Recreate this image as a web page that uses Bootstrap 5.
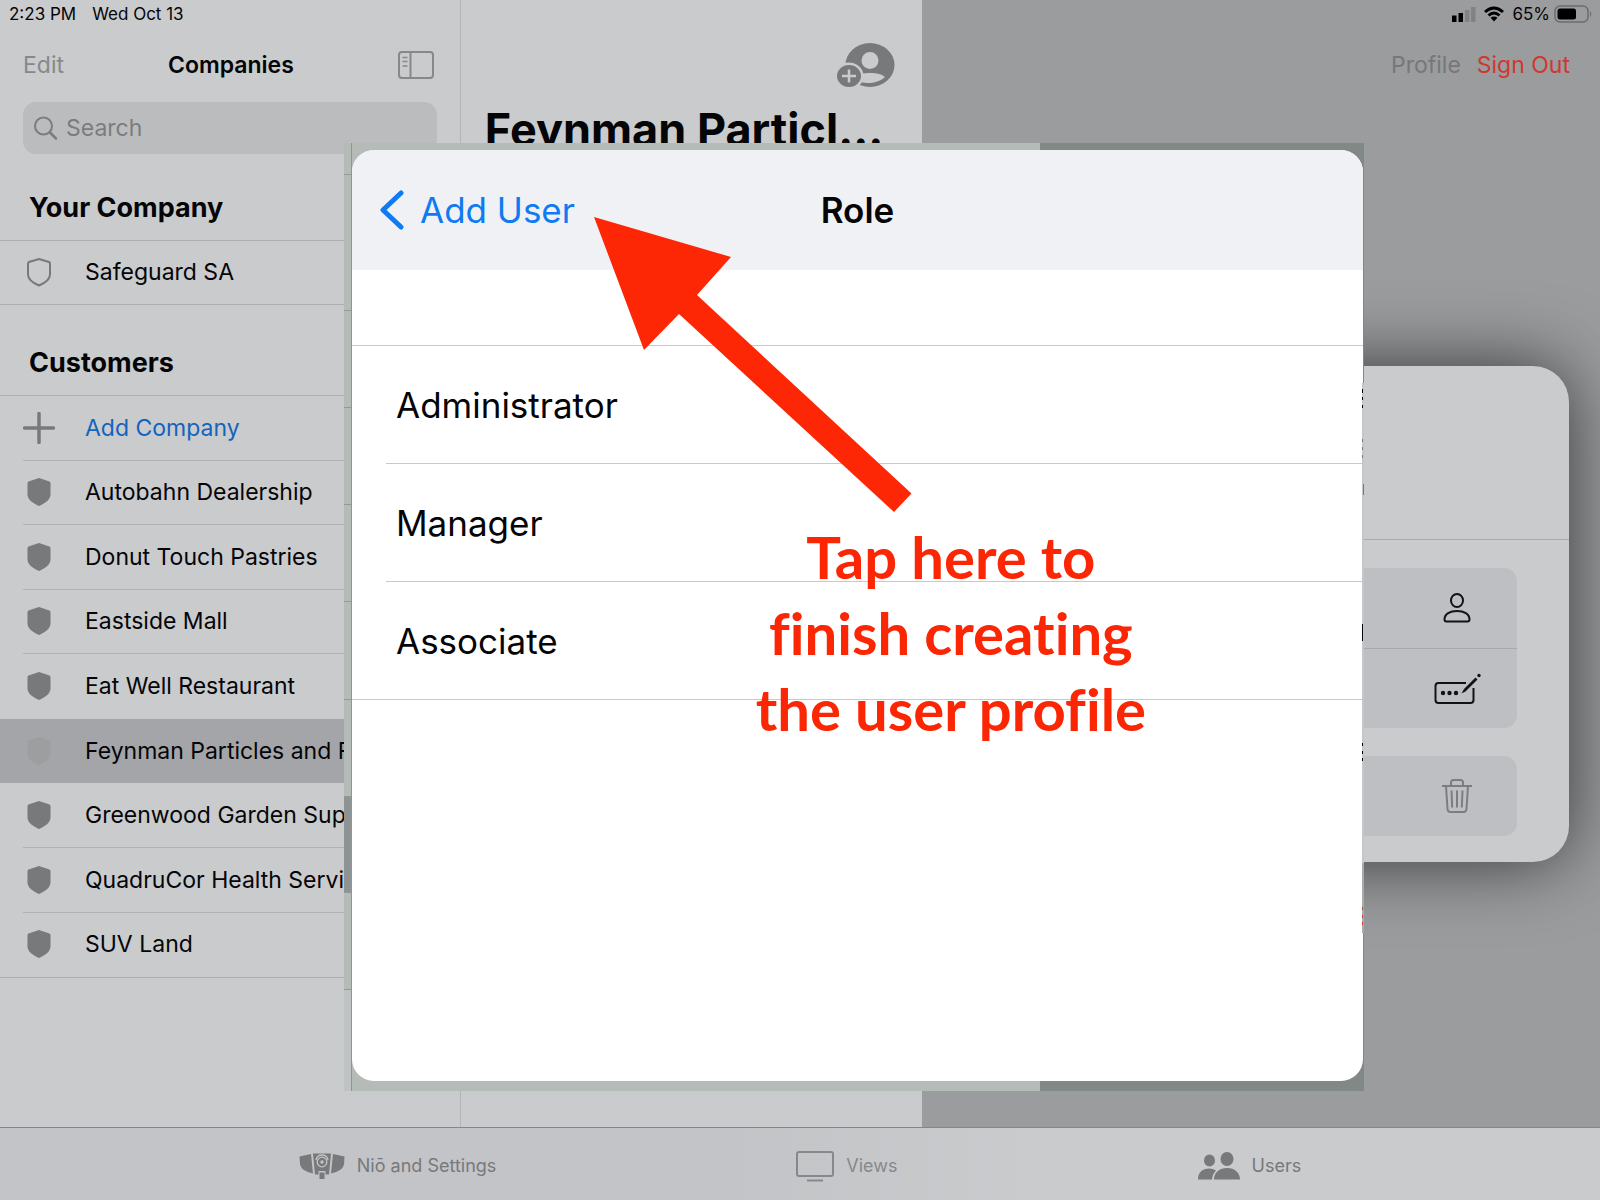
<!DOCTYPE html>
<html lang="en">
<head>
<meta charset="utf-8">
<meta name="viewport" content="width=device-width, initial-scale=1">
<title>Companies</title>
<link href="https://cdn.jsdelivr.net/npm/bootstrap@5.3.0/dist/css/bootstrap.min.css" rel="stylesheet">
<style>
  body { font-family: Inter, "Liberation Sans", sans-serif; font-size: 23px; line-height: 36px; color: #050507; background: #c9cbcd; }
  a, button { color: inherit; text-decoration: none; }
  button { background: none; border: 0; padding: 0; }
  svg { display: block; flex: none; }
  .tone-muted { color: #87888b; }
  .tone-icon { color: #77797b; }
  .tone-link { color: #1463bd; }
  .tone-alert { color: #cf3732; }
  .tone-profile { color: #767779; }

  .pane { flex: 0 0 28.8%; min-width: 0; border-right: 1px solid #b2b3b5; }
  .pane-mid { border-right: 0; }
  .pane-detail { min-width: 0; background: #9b9c9e; overflow: hidden; }
  .status-row { height: 28px; font-size: 17px; line-height: 28px; padding: 0 8px 0 9px; }
  .top-row { height: 74px; padding: 0 26px 0 23px; }
  .top-row h1 { font-size: 23px; line-height: 36px; }
  .find-box { height: 52px; margin: 0 23px; padding: 0 11px; gap: 9px; border-radius: 13px; background: #bbbcbe; color: #7b7c7f; }
  .find-box input { background: none; border: 0; outline: 0; padding: 0; color: inherit; }
  .find-box input::placeholder { color: #7b7c7f; opacity: 1; }
  .section-title { font-size: 27px; line-height: 36px; font-weight: 700; margin: 0; padding: 36px 29px 14px; }
  .section-title + .org-list { border-top: 1px solid #adaeb0; border-bottom: 1px solid #adaeb0; }
  .section-next { padding-top: 40px; }
  .org-list { height: 65px; }
  .org-list-long { height: 583px; }
  .org-row { padding-left: 23px; background: none; }
  .org-row > span { border-bottom: 1px solid #b0b1b3; gap: 30px; white-space: nowrap; }
  .org-row:last-child > span, .org-row.no-rule > span { border-color: transparent; }
  .org-row.is-current { background: #a4a5a9; }
  .org-row.is-current > span { border-color: transparent; }
  .org-row.is-current svg { color: #9d9ea0; }
  .pane-title { font-size: 45px; line-height: 56px; font-weight: 700; margin: 0; padding: 0 24px; white-space: nowrap; }

  .detail-card { width: 620px; height: 496px; margin: 264px 31px 0 auto; border-radius: 36px; background: #c9cbcd; box-shadow: 0 0 72px rgba(0,0,0,.65); }
  .detail-head { height: 174px; border-bottom: 1px solid #a9aaac; }
  .detail-group { margin: 28px 52px 0; border-radius: 13px; background: #bebfc3; overflow: hidden; }
  .detail-group button { height: 80px; padding-right: 40px; }
  .detail-group button + button { border-top: 1px solid #a7a8ab; }
  .icon-slot { width: 40px; }

  .tab-strip { height: 73px; gap: 300px; border-top: 1px solid #85868a; background: linear-gradient(90deg, #c3c4c7 45%, #c9cbcd 65%); color: #77797b; font-size: 18px; padding-top: 4px; }
  .tab-strip a { gap: 12px; }

  .snap { position: absolute; left: 21.5%; right: 14.75%; top: 143px; bottom: 109px; background: linear-gradient(90deg, #b5bcb8 68.2%, #828885 68.2%); }
  .snap-edge { width: 8px; border-right: 1px solid #8f9693; }
  .snap-edge i { display: block; flex: 0 0 97px; border-top: 1px solid #929996; }
  .snap-edge i:nth-child(1) { flex-basis: 31px; border: 0; }
  .snap-edge i:nth-child(2) { flex-basis: 136px; }
  .snap-edge i:nth-child(6) { flex-basis: 98px; }
  .snap-edge i.dim { flex-basis: 96px; background: #8e9394; }
  .snap-edge i:last-child { flex: 1 1 0; background: #c0c3c4; }
  .sheet { margin: 7px 1px 10px 0; border-radius: 22px; background: #fff; overflow: hidden; font-size: 35px; line-height: 48px; }
  .sheet-bar { height: 120px; background: #f0f1f5; margin-bottom: 75px; padding: 0 28px; }
  .sheet-bar h2 { font-size: 35px; line-height: 48px; }
  .back-btn { color: #0f7bf2; gap: 16px; }
  .role-list { border-top: 1px solid #c9c9cb; border-bottom: 1px solid #c9c9cb; padding-left: 34px; }
  .role-list button { height: 118px; padding: 0 10px; }
  .role-list button:first-child { height: 117px; }
  .role-list button + button { border-top: 1px solid #c9c9cb; }
  .edge-marks { position: absolute; right: 0; top: 240px; }
  .tip-arrow { position: absolute; left: 250px; top: 74px; }
  .tip-text { position: absolute; left: 30%; right: 11%; top: 376px; margin: 0; color: #fb2604; text-align: center; font: 700 58px/76px Lato, sans-serif; font-variant-ligatures: none; }
</style>
<script src="https://cdn.jsdelivr.net/npm/bootstrap@5.3.0/dist/js/bootstrap.bundle.min.js"></script>
</head>
<body>
<svg width="0" height="0" class="position-absolute" aria-hidden="true">
  <symbol id="shield" viewBox="0 0 32 32"><path d="M16 2 26.500 5.500Q27.500 6 27.500 7.500V18.500C27.500 23.500 22 27.500 16 30 10 27.500 4.500 23.500 4.500 18.500V7.500Q4.500 6 5.500 5.500Z"/></symbol>
</svg>
<div class="position-relative d-flex flex-column min-vh-100">
  <div class="d-flex flex-grow-1">

    <aside class="pane">
      <div class="status-row d-flex gap-3"><span>2:23 PM</span><span>Wed Oct 13</span></div>
      <div class="top-row d-flex align-items-center justify-content-between">
        <button type="button" class="tone-muted">Edit</button>
        <h1 class="fw-semibold m-0">Companies</h1>
        <button type="button" class="tone-muted" aria-label="Toggle sidebar">
          <svg width="36" height="28" fill="none" stroke="currentColor" stroke-width="2"><rect x="1" y="1" width="34" height="26" rx="3"/><path d="M12.500 1v26"/><path d="M4.500 6.500h5M4.500 10.500h5M4.500 15h5" stroke-width="1.500"/></svg>
        </button>
      </div>
      <form class="find-box d-flex align-items-center">
        <svg width="23" height="24" fill="none" stroke="currentColor" stroke-width="2" stroke-linecap="round"><circle cx="9.500" cy="10" r="8.500"/><path d="m16 16.500 6 6" stroke-width="2.500"/></svg>
        <input type="text" class="flex-grow-1" placeholder="Search" aria-label="Search">
      </form>

      <h2 class="section-title">Your Company</h2>
      <div class="org-list d-flex flex-column">
        <a href="#" class="org-row d-flex flex-fill"><span class="d-flex flex-fill align-items-center"><svg width="32" height="32" class="tone-icon" fill="none" stroke="currentColor" stroke-width="2"><path d="M16 3 26 6Q27 6.500 27 8V18.500C27 23 22 27 16 29.500 10 27 5 23 5 18.500V8Q5 6.500 6 6Z"/></svg>Safeguard SA</span></a>
      </div>

      <h2 class="section-title section-next">Customers</h2>
      <div class="org-list org-list-long d-flex flex-column">
        <a href="#" class="org-row d-flex flex-fill tone-link"><span class="d-flex flex-fill align-items-center"><svg width="32" height="32" class="tone-icon" stroke="currentColor" stroke-width="3.500" stroke-linecap="round"><path d="M16 1.500v29M1.500 16h29"/></svg>Add Company</span></a>
        <a href="#" class="org-row d-flex flex-fill"><span class="d-flex flex-fill align-items-center"><svg width="32" height="32" class="tone-icon" fill="currentColor"><use href="#shield"/></svg>Autobahn Dealership</span></a>
        <a href="#" class="org-row d-flex flex-fill"><span class="d-flex flex-fill align-items-center"><svg width="32" height="32" class="tone-icon" fill="currentColor"><use href="#shield"/></svg>Donut Touch Pastries</span></a>
        <a href="#" class="org-row d-flex flex-fill"><span class="d-flex flex-fill align-items-center"><svg width="32" height="32" class="tone-icon" fill="currentColor"><use href="#shield"/></svg>Eastside Mall</span></a>
        <a href="#" class="org-row no-rule d-flex flex-fill"><span class="d-flex flex-fill align-items-center"><svg width="32" height="32" class="tone-icon" fill="currentColor"><use href="#shield"/></svg>Eat Well Restaurant</span></a>
        <a href="#" class="org-row is-current d-flex flex-fill" aria-current="true"><span class="d-flex flex-fill align-items-center"><svg width="32" height="32" fill="currentColor"><use href="#shield"/></svg>Feynman Particles and F</span></a>
        <a href="#" class="org-row d-flex flex-fill"><span class="d-flex flex-fill align-items-center"><svg width="32" height="32" class="tone-icon" fill="currentColor"><use href="#shield"/></svg>Greenwood Garden Sup</span></a>
        <a href="#" class="org-row d-flex flex-fill"><span class="d-flex flex-fill align-items-center"><svg width="32" height="32" class="tone-icon" fill="currentColor"><use href="#shield"/></svg>QuadruCor Health Servi</span></a>
        <a href="#" class="org-row d-flex flex-fill"><span class="d-flex flex-fill align-items-center"><svg width="32" height="32" class="tone-icon" fill="currentColor"><use href="#shield"/></svg>SUV Land</span></a>
      </div>
    </aside>

    <section class="pane pane-mid">
      <div class="status-row"></div>
      <div class="top-row d-flex align-items-center justify-content-end">
        <button type="button" class="tone-icon" aria-label="Add user">
          <svg width="62" height="46" viewBox="0 0 62 46"><ellipse cx="36" cy="23" rx="24.500" ry="22" fill="currentColor"/><g fill="#c9cbcd"><circle cx="36" cy="18.500" r="8.500"/><path d="M21 35C26 29.500 46 29.500 51 35 43 42.500 29 42.500 21 38Z"/><ellipse cx="15" cy="34" rx="14.500" ry="13.500"/></g><ellipse cx="15" cy="34" rx="12" ry="11" fill="currentColor"/><path d="M15 27.500v13M8 34h14" stroke="#c9cbcd" stroke-width="2.500"/></svg>
        </button>
      </div>
      <h2 class="pane-title">Feynman Particl…</h2>
    </section>

    <main class="pane-detail flex-grow-1">
      <div class="status-row d-flex align-items-center justify-content-end">
        <svg width="24" height="16" class="me-2"><path d="M0 9.500h4.500V16H0zM6.500 7H11v9H6.500z"/><path d="M13 4h4.500v12H13zM19 1h4.500v15H19z" fill="#818284"/></svg>
        <svg width="20" height="16" class="me-2" fill="none" stroke="#000" stroke-width="3"><path d="M1 6Q10-2 19 6M4.500 9.500Q10 4.500 15.500 9.500"/><path d="M6.500 11.800Q10 9 13.500 11.800L10 15.500Z" fill="#000" stroke="none"/></svg>
        <span>65%</span>
        <svg width="38" height="18" class="ms-1"><rect x="1" y="1" width="33" height="16" rx="5" fill="none" stroke="#6b6c6e" stroke-width="1.500"/><rect x="3.500" y="3.500" width="18.500" height="11" rx="2.500"/><path d="M36 6q2.500 3 0 6z" fill="#6b6c6e"/></svg>
      </div>
      <div class="top-row d-flex align-items-center justify-content-end gap-3">
        <a href="#" class="tone-profile">Profile</a>
        <a href="#" class="tone-alert me-1">Sign Out</a>
      </div>
      <div class="detail-card">
        <div class="detail-head"></div>
        <div class="detail-group">
          <button type="button" class="d-flex w-100 align-items-center justify-content-end" aria-label="User">
            <span class="icon-slot d-flex justify-content-center"><svg width="28" height="30" fill="none" stroke="#111214" stroke-width="2"><ellipse cx="14" cy="7.500" rx="6" ry="6.500"/><path d="M1.500 26.500C1.500 21 7 18 14 18s12.500 3 12.500 8.500q0 2-2 2h-21q-2 0-2-2Z"/></svg></span>
          </button>
          <button type="button" class="d-flex w-100 align-items-center justify-content-end" aria-label="Change passcode">
            <span class="icon-slot d-flex justify-content-center"><svg width="48" height="32" fill="none" stroke="#111214" stroke-width="2"><path d="M33 10H5.500q-3 0-3 3v14q0 3 3 3h32q3 0 3-3V15"/><g fill="#111214" stroke="none"><circle cx="10" cy="20" r="2.200"/><circle cx="16.500" cy="20" r="2.200"/><circle cx="23" cy="20" r="2.200"/><path d="m28.500 20.500 2.500-4.500L42.500 4.500l2 2L32.500 18.500Z"/><circle cx="46" cy="2.500" r="1.700"/></g></svg></span>
          </button>
        </div>
        <div class="detail-group">
          <button type="button" class="d-flex w-100 align-items-center justify-content-end" aria-label="Delete">
            <span class="icon-slot d-flex justify-content-center"><svg width="30" height="36" fill="none" stroke="#7c7d80" stroke-width="2"><path d="M0 8h30M4 8l1.500 23q.3 3 3 3h13q2.700 0 3-3L26 8M9 8V4.500Q9 2 11.500 2h7Q21 2 21 4.500V8M9.500 12.500l.7 17M15 12.500v17M20.500 12.500l-.7 17"/></svg></span>
          </button>
        </div>
      </div>
    </main>
  </div>

  <nav class="tab-strip d-flex align-items-center justify-content-center">
    <a href="#" class="d-flex align-items-center"><svg width="46" height="28" fill="currentColor"><path d="M.5 4.500 12 2l2 19.500Q2.500 19 1 12.500ZM45.500 4.500 34 2l-2 19.500Q43.500 19 45 12.500Z"/><path d="M14 1.500h18l-2 21h-3.500V19h-7v3.500H16ZM20.500 20.500h5V27h-5z"/><g fill="none" stroke="#c4c5c8" stroke-width="1.300"><circle cx="23" cy="10" r="4.800"/><path d="M17 8Q18 3 23 3t6 5"/></g><circle cx="23" cy="10" r="1.700" fill="#c4c5c8"/></svg>Niō and Settings</a>
    <a href="#" class="d-flex align-items-center tone-muted"><svg width="38" height="32" fill="none" stroke="currentColor" stroke-width="2"><rect x="1" y="2" width="36" height="24" rx="2"/><path d="M11 30.500h16"/></svg>Views</a>
    <a href="#" class="d-flex align-items-center"><svg width="42" height="28" fill="currentColor"><ellipse cx="11.500" cy="8.500" rx="5.500" ry="6"/><ellipse cx="29" cy="7" rx="6.500" ry="7"/><path d="M0 27.500C0 20 5 16.500 11 16.500q4 0 7 2-3.500 3.500-4 9ZM16 27.500c0-7 5.500-11.500 13-11.500s13 4.500 13 11.500Z"/></svg>Users</a>
  </nav>

  <div class="snap d-flex" role="dialog" aria-label="Role">
    <div class="snap-edge d-flex flex-column"><i></i><i></i><i></i><i></i><i></i><i></i><i></i><i class="dim"></i><i></i><i></i></div>
    <div class="sheet flex-grow-1">
      <div class="sheet-bar position-relative d-flex align-items-center">
        <button type="button" class="back-btn d-flex align-items-center"><svg width="24" height="40" fill="none" stroke="currentColor" stroke-width="5" stroke-linecap="round" stroke-linejoin="round"><path d="M21 3 3 20l18 17"/></svg>Add User</button>
        <h2 class="fw-semibold m-0 position-absolute start-50 translate-middle-x">Role</h2>
      </div>
      <div class="role-list">
        <button type="button" class="d-block w-100 text-start">Administrator</button>
        <button type="button" class="d-block w-100 text-start">Manager</button>
        <button type="button" class="d-block w-100 text-start">Associate</button>
      </div>
    </div>
    <svg class="edge-marks" width="2" height="550" aria-hidden="true"><path d="M0 0h2v750H0z" fill="#c4c6c8"/><path d="M0 6h1v4H0zM0 14h1v3H0zM0 22h1v3H0zM0 241h1v17H0zM0 360h1v3H0zM0 368h1v3H0zM0 375h1v3H0z" fill="#050507"/><path d="M0 56h1v3H0zM0 64h1v3H0zM0 72h1v3H0zM1 101h1v11H1z" fill="#77797b"/><path d="M0 480h2v70H0z" fill="#a9aaac"/><path d="M0 524h1v3H0zM0 532h1v3H0zM0 539h1v3H0z" fill="#cf3732"/></svg>
    <svg class="tip-arrow" width="318" height="296" fill="#fd2705" aria-hidden="true"><path d="M0 0 137 40 103 78 317.500 276.500 300 295 85 97 50 133Z"/></svg>
    <p class="tip-text">Tap here to<br>finish creating<br>the user profile</p>
  </div>
</div>
</body>
</html>
